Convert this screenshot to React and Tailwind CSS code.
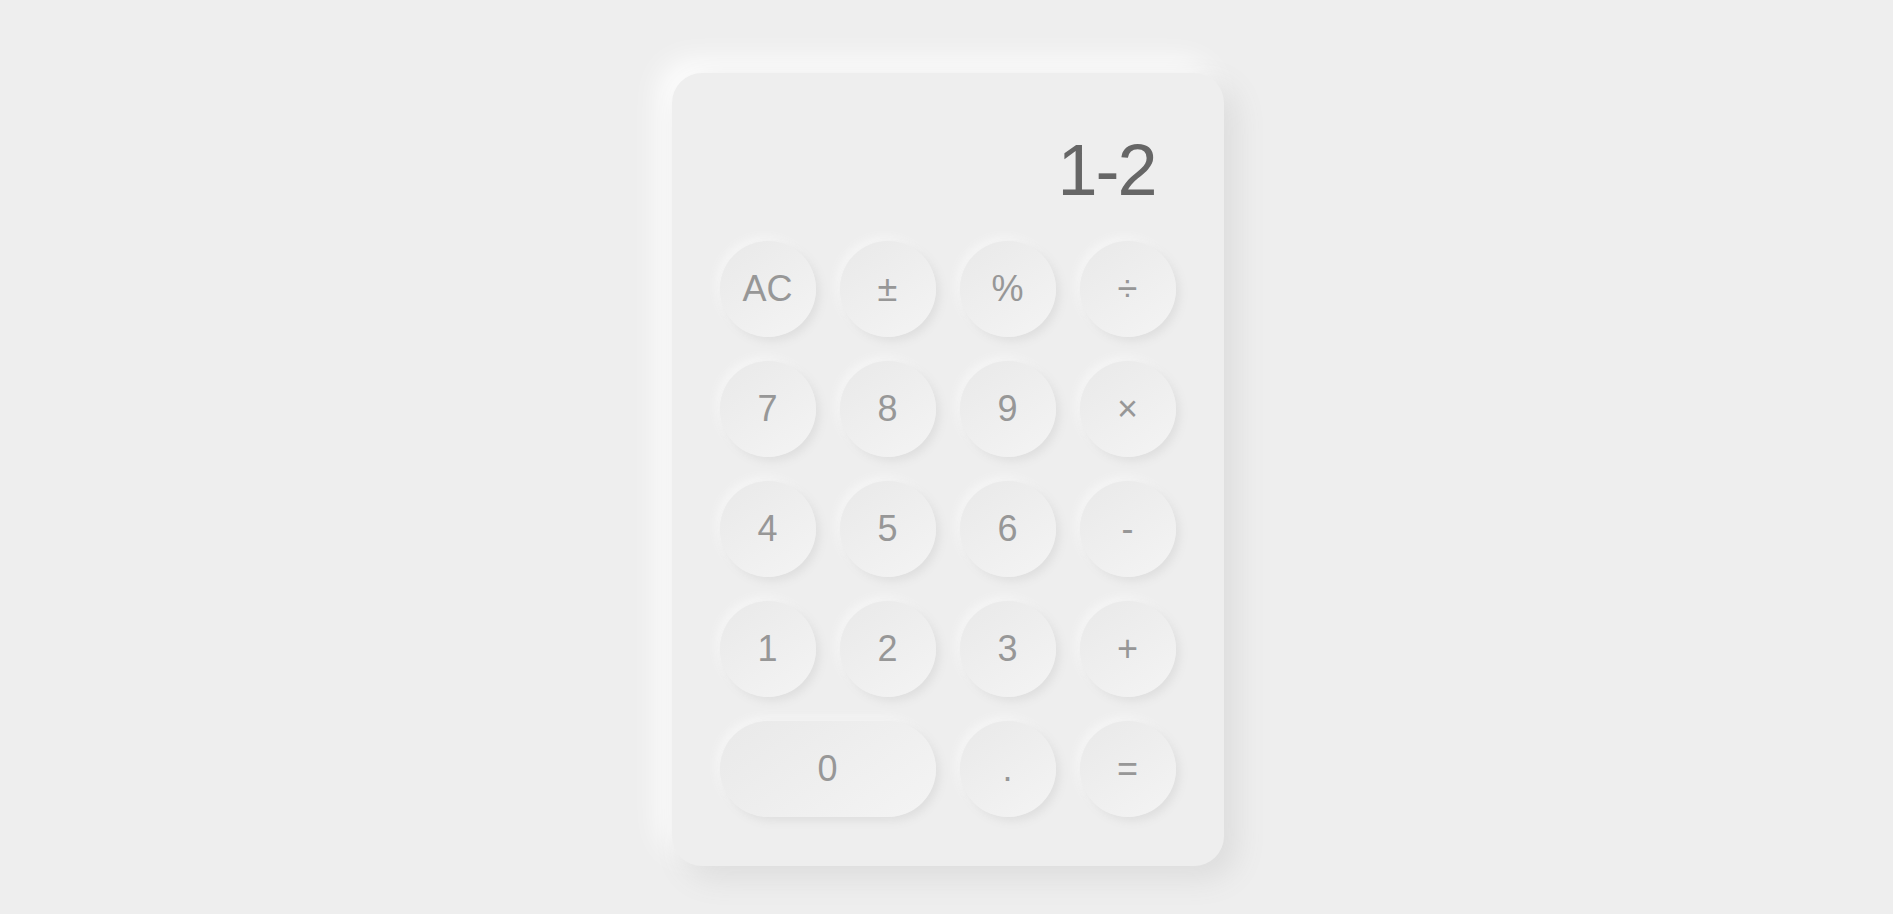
export default function App() {
  const keys = [
    "AC", "±", "%", "÷",
    "7", "8", "9", "×",
    "4", "5", "6", "-",
    "1", "2", "3", "+",
    "0", ".", "=",
  ];

  return (
    <div className="min-h-screen bg-[#eeeeee] flex justify-center pt-[73px] pl-[2px] font-['Liberation_Sans',Arial,sans-serif]">
      {/* card */}
      <div className="w-[552px] h-[793px] rounded-[30px] bg-[#eeeeee] p-12 shadow-[12px_12px_30px_#dcdcdc,-12px_-12px_30px_#ffffff]">
        <div className="h-[120px] pt-[13px] pr-5 text-right text-7xl leading-none tracking-[-2px] text-[#666666]">
          1-2
        </div>

        <div className="grid grid-cols-4 gap-6">
          {keys.map((k) => (
            <button
              key={k}
              className={`${k === "0" ? "col-span-2" : ""} h-24 rounded-full flex items-center justify-center text-4xl text-[#979797] bg-[linear-gradient(145deg,#e9e9e9,#f4f4f4)] shadow-[4px_4px_9px_#dfdfdf,-4px_-4px_9px_#f6f6f6]`}
            >
              {k}
            </button>
          ))}
        </div>
      </div>
    </div>
  );
}
